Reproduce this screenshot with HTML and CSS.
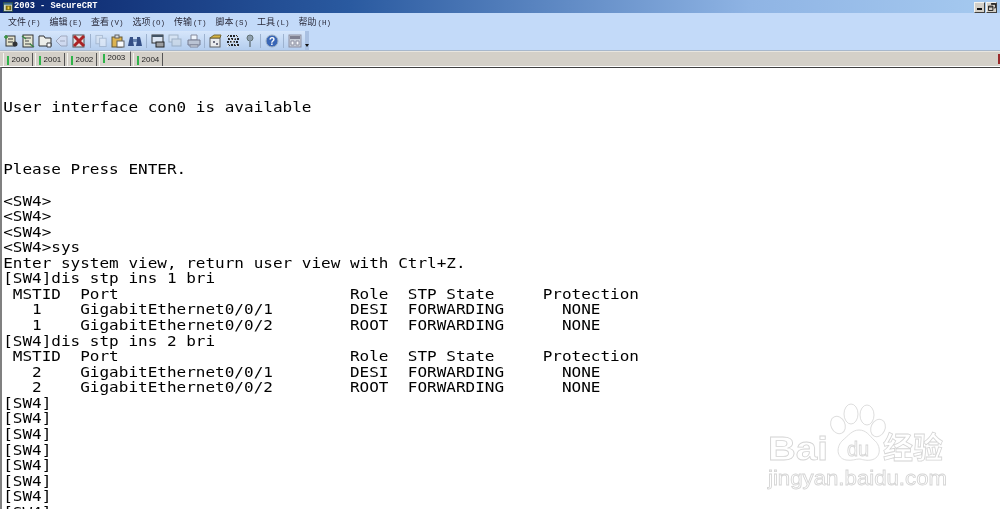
FILE: index.html
```html
<!DOCTYPE html>
<html lang="zh">
<head>
<meta charset="utf-8">
<title>2003 - SecureCRT</title>
<link rel="stylesheet" href="styles.css">
</head>
<body>
<div class="app">
  <header class="titlebar">
    <svg class="appicon" viewBox="0 0 11 11"><rect x="0.5" y="0.5" width="10" height="10" fill="#cfd8c8" stroke="#2b4a4a"/><rect x="1" y="1" width="9" height="2" fill="#3a6a8a"/><rect x="3" y="4" width="6" height="5" fill="#7a6a10"/><rect x="5" y="5" width="2" height="3" fill="#f0d040"/></svg>
    <span class="titletext">2003 - SecureCRT</span>
    <div class="winbtns">
      <span class="winbtn"><i class="min"></i></span>
      <span class="winbtn"><svg viewBox="0 0 9 9" class="restore"><path d="M3.5 .5h5v5h-2M3.5 1.5h5" fill="none" stroke="#111"/><path d="M.5 3.5h5v5h-5zM.5 4.5h5" fill="none" stroke="#111"/></svg></span>
    </div>
  </header>
  <nav class="menubar">
    <span class="menu">文件<small>(F)</small></span>
    <span class="menu">编辑<small>(E)</small></span>
    <span class="menu">查看<small>(V)</small></span>
    <span class="menu">选项<small>(O)</small></span>
    <span class="menu">传输<small>(T)</small></span>
    <span class="menu">脚本<small>(S)</small></span>
    <span class="menu">工具<small>(L)</small></span>
    <span class="menu">帮助<small>(H)</small></span>
  </nav>
  <div class="toolbar">
    <div class="tools">
      <svg class="ic" viewBox="0 0 14 14"><rect x="2" y="2" width="9" height="10" fill="#e8e4c8" stroke="#222"/><path d="M4 5h5M4 8h5" stroke="#222"/><path d="M0 3h4M2 1v4" stroke="#2a8a30" stroke-width="1.5"/><circle cx="11" cy="10" r="2.5" fill="#222"/></svg>
      <svg class="ic" viewBox="0 0 14 14"><rect x="2" y="1" width="10" height="12" fill="#e8e8d0" stroke="#222"/><path d="M4 4h6M4 7h4M4 10h6" stroke="#333"/><path d="M1 2l4 3M9 10l4 3" stroke="#2a7a30" stroke-width="1.5"/></svg>
      <svg class="ic" viewBox="0 0 14 14"><path d="M1 2h5l1 2h6v8H1z" fill="#f0f0e8" stroke="#222"/><path d="M9 9h4v4H9z" fill="#fff" stroke="#333"/></svg>
      <svg class="ic faded" viewBox="0 0 14 14"><path d="M1 7l5-5h6v10H6z" fill="#dde" stroke="#778"/><path d="M5 7h5" stroke="#778"/></svg>
      <svg class="ic" viewBox="0 0 14 14"><rect x="1" y="1" width="11" height="12" fill="#e4e4e4" stroke="#444"/><path d="M2 2l10 10M12 2L2 12" stroke="#a81010" stroke-width="3"/></svg>
      <i class="sep"></i>
      <svg class="ic faded small" viewBox="0 0 14 14"><rect x="1" y="1" width="7" height="9" fill="#dfe6f0" stroke="#8a9ab0"/><rect x="5" y="4" width="7" height="9" fill="#eef2f8" stroke="#8a9ab0"/></svg>
      <svg class="ic" viewBox="0 0 14 14"><rect x="1" y="3" width="10" height="10" fill="#e0b040" stroke="#5a4a20"/><rect x="4" y="1" width="4" height="3" fill="#ddd" stroke="#555"/><rect x="6" y="7" width="7" height="6" fill="#fff" stroke="#555"/></svg>
      <svg class="ic" viewBox="0 0 14 14"><path d="M2 3h3v4l1 5H0l1-5zM9 3h3l1 4 1 5H8l1-5z" fill="#24407a"/><rect x="5" y="5" width="4" height="3" fill="#5a78a8"/></svg>
      <i class="sep"></i>
      <svg class="ic" viewBox="0 0 14 14"><rect x="1" y="1" width="11" height="8" fill="#dfe8f4" stroke="#222"/><rect x="1" y="1" width="11" height="2" fill="#345"/><rect x="5" y="8" width="8" height="5" fill="#999" stroke="#111"/></svg>
      <svg class="ic faded" viewBox="0 0 14 14"><rect x="1" y="1" width="9" height="7" fill="#dfe8f0" stroke="#789"/><rect x="4" y="5" width="9" height="7" fill="#cfd8e0" stroke="#789"/></svg>
      <svg class="ic wide faded2" viewBox="0 0 14 14"><path d="M4 1h6v5H4z" fill="#fff" stroke="#667"/><path d="M1 6h12v5H1z" fill="#b8bcc8" stroke="#556"/><path d="M3 11h8v2H3z" fill="#eee" stroke="#667"/></svg>
      <i class="sep"></i>
      <svg class="ic" viewBox="0 0 14 14"><rect x="1" y="4" width="10" height="9" fill="#eee" stroke="#555"/><path d="M1 4l4-3h7l-1 3z" fill="#d8b030" stroke="#6a5a20"/><path d="M4 7h2v2H4zM7 9h2v2H7z" fill="#667"/></svg>
      <svg class="ic" viewBox="0 0 14 14"><g stroke="#111" stroke-dasharray="2 1" fill="none" stroke-width="1.8"><path d="M1 2h12M2 5h11M1 8h12M2 11h11"/></g><path d="M1 1l11 12M12 1L1 13" stroke="#eee"/></svg>
      <svg class="ic key" viewBox="0 0 14 14"><circle cx="7" cy="4" r="3" fill="#8a9aa8" stroke="#566"/><rect x="6" y="6" width="2" height="7" fill="#7a8a98"/></svg>
      <i class="sep"></i>
      <svg class="ic" viewBox="0 0 14 14"><circle cx="7" cy="7" r="6" fill="#2a5ab0" stroke="#9ab"/><text x="7" y="10.5" class="helpq">?</text></svg>
      <i class="sep"></i>
      <svg class="ic" viewBox="0 0 14 14"><rect x="1" y="1" width="12" height="12" fill="#c8ccd4" stroke="#889"/><rect x="2" y="2" width="10" height="3" fill="#778"/><path d="M3 7h3v4H3zM8 7h3v4H8z" fill="#fff" stroke="#889"/></svg>
      <span class="chev"><i></i></span>
    </div>
  </div>
  <div class="tabstrip">
    <span class="tab"><i class="mark"></i>2000</span>
    <span class="tab"><i class="mark"></i>2001</span>
    <span class="tab"><i class="mark"></i>2002</span>
    <span class="tab active"><i class="mark"></i>2003</span>
    <span class="tab"><i class="mark"></i>2004</span>
    <span class="redmark"></span>
  </div>
  <main class="terminal">
<pre class="screen">


User interface con0 is available



Please Press ENTER.

&lt;SW4&gt;
&lt;SW4&gt;
&lt;SW4&gt;
&lt;SW4&gt;sys
Enter system view, return user view with Ctrl+Z.
[SW4]dis stp ins 1 bri
 MSTID  Port                        Role  STP State     Protection
   1    GigabitEthernet0/0/1        DESI  FORWARDING      NONE
   1    GigabitEthernet0/0/2        ROOT  FORWARDING      NONE
[SW4]dis stp ins 2 bri
 MSTID  Port                        Role  STP State     Protection
   2    GigabitEthernet0/0/1        DESI  FORWARDING      NONE
   2    GigabitEthernet0/0/2        ROOT  FORWARDING      NONE
[SW4]
[SW4]
[SW4]
[SW4]
[SW4]
[SW4]
[SW4]
[SW4]</pre>
    <svg class="watermark" viewBox="0 0 190 90">
      <g class="wm-shape">
        <ellipse cx="73" cy="33" rx="7" ry="9" transform="rotate(-25 73 33)"/>
        <ellipse cx="86" cy="22" rx="7" ry="10"/>
        <ellipse cx="102" cy="23" rx="7" ry="10"/>
        <ellipse cx="113" cy="36" rx="7" ry="9" transform="rotate(25 113 36)"/>
        <path d="M94 38c7 0 10 5 15 10 7 5 8 18-3 20-6 1-9-1-12-1s-7 2-13 1c-10-2-10-14-3-20 5-4 9-10 16-10z"/>
      </g>
      <text x="3" y="68" class="wm-big" textLength="60" lengthAdjust="spacingAndGlyphs">Bai</text>
      <text x="82" y="64" class="wm-du">du</text>
      <text x="118" y="66" class="wm-cn">经验</text>
      <text x="3" y="93" class="wm-url" textLength="179" lengthAdjust="spacingAndGlyphs">jingyan.baidu.com</text>
    </svg>
  </main>
</div>
</body>
</html>
```
FILE: styles.css
```css
* { box-sizing: border-box; }
html, body { margin: 0; height: 100%; overflow: hidden; background: #fff; }
.app { width: 1000px; height: 509px; display: flex; flex-direction: column; overflow: hidden; filter: blur(.35px); }

.titlebar {
  height: 13px; flex: none; display: flex; align-items: center; padding: 0 3px 0 3px;
  background: linear-gradient(90deg, #0a246a 0%, #2a5aa0 35%, #8fb4e4 75%, #a6caf0 100%);
}
.appicon { width: 10px; height: 10px; margin-right: 1px; flex: none; }
.titletext { color: #fff; font: bold 8.7px/13px "Liberation Mono", monospace; white-space: pre; }
.winbtns { margin-left: auto; display: flex; gap: 1px; margin-top: 1px; }
.winbtn {
  width: 11px; height: 11px; background: #d4d0c8; display: flex; align-items: center; justify-content: center;
  border: 1px solid; border-color: #f4f4f0 #404040 #404040 #f4f4f0;
}
.min { display: block; width: 5px; height: 2px; background: #111; margin-top: 4px; }
.restore { width: 8px; height: 8px; }

.menubar {
  height: 18px; flex: none; background: #c3daf9; display: grid; grid-template-columns: repeat(8, 41.5px);
  justify-content: start; align-items: center; padding-left: 8px;
  font: 9px/18px "Noto Sans CJK SC", sans-serif; color: #2a2a3a;
}
.menu { white-space: nowrap; }
.menu small { font: 7.5px "Liberation Mono", monospace; margin-left: 1px; }

.toolbar { height: 20px; flex: none; background: #c3daf9; border-bottom: 1px solid #a8b8cc; }
.tools {
  width: 307px; height: 19px; display: flex; align-items: center; padding-left: 4px;
  background: linear-gradient(#d6e6fb, #b4cdee);
}
.ic { width: 14px; height: 14px; margin-right: 3px; flex: none; opacity: .9; }
.ic.faded { opacity: .5; }
.ic.faded2 { opacity: .7; }
.small { width: 13px; }
.wide { margin-left: 2px; margin-right: 2px; }
.key { margin-right: 2px; }
.helpq { font: bold 10px "Liberation Sans", sans-serif; fill: #fff; text-anchor: middle; }
.sep { width: 1px; height: 14px; background: #9db2cf; margin: 0 4px 0 1px; flex: none; }
.chev {
  margin-left: auto; width: 8px; height: 19px; background: #a9c0e2; display: flex; align-items: flex-end;
  justify-content: center; padding-bottom: 3px;
}
.chev i { display: block; width: 0; height: 0; border: 2.5px solid transparent; border-top: 3px solid #111; border-bottom: 0; }

.tabstrip {
  height: 16px; flex: none; background: #d4d0c8; display: flex; align-items: flex-end; padding-left: 3px; gap: 2px;
  border-bottom: 1px solid #fff; box-shadow: inset 0 1px 0 #e8e6e0; position: relative;
}
.tab {
  width: 30px; height: 13px; display: flex; align-items: center; gap: 3px; padding: 1px 0 0 3px;
  font: 8px/12px "Liberation Sans", sans-serif; color: #222;
  border-right: 1px solid #555; border-left: 1px solid #f4f4f0;
}
.tab.active { height: 15px; background: #d8d4cc; border-top: 1px solid #fff; padding: 0 0 2px 3px; width: 32px; }
.mark { display: block; width: 1.5px; height: 9px; background: #2fb34a; flex: none; }
.redmark { position: absolute; right: 0; top: 3px; width: 2px; height: 10px; background: #9a2a2a; }

.terminal {
  flex: 1; min-height: 0; position: relative; overflow: hidden; background: #fff;
  border-left: 2px solid #808080; border-top: 1px solid #404040;
}
.screen {
  margin: 0; padding: 1px 0 0 1px; transform: scaleX(1.143); transform-origin: 0 0;
  font: 14px/15.56px "DejaVu Sans Mono", monospace; color: #000; white-space: pre;
}
.watermark { position: absolute; left: 763px; top: 321px; width: 190px; height: 96px; overflow: visible; }
.wm-shape ellipse, .wm-shape path { fill: #fff; stroke: #dedede; stroke-width: 1; }
.wm-big, .wm-du, .wm-cn, .wm-url { fill: #fff; stroke: #d4d4d4; stroke-width: .8; }
.wm-big { font: bold 34px "Liberation Sans", sans-serif; }
.wm-du { font: 20px "Liberation Sans", sans-serif; }
.wm-cn { font: bold 30px "Noto Sans CJK SC", sans-serif; }
.wm-url { font: 20px "Liberation Sans", sans-serif; }
```
